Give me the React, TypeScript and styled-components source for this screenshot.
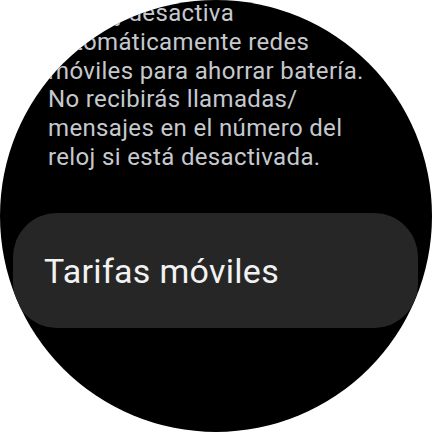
import styled, { createGlobalStyle } from "styled-components";

const GlobalStyle = createGlobalStyle`
  html, body {
    margin: 0;
    padding: 0;
    background: #ffffff;
  }
  * { box-sizing: border-box; }
`;

const Screen = styled.div`
  width: 432px;
  height: 432px;
  border-radius: 50%;
  background: #000000;
  overflow: hidden;
  display: flex;
  flex-direction: column;
  font-family: Roboto, "Noto Sans", sans-serif;
`;

const Description = styled.p`
  margin: -1px 0 0 0;
  padding-left: 48px;
  font-size: 24px;
  line-height: 28.8px;
  letter-spacing: 0.35px;
  color: #c5c9ce;
  white-space: nowrap;
`;

const ListButton = styled.button`
  margin: 41px 0 0 13px;
  width: 405px;
  height: 115px;
  border: none;
  border-radius: 44px;
  background: #262626;
  color: #f2f2f2;
  font-family: inherit;
  font-size: 34px;
  letter-spacing: 0.3px;
  text-align: left;
  padding: 2px 0 0 31px;
  display: flex;
  align-items: center;
`;

export default function App() {
  return (
    <>
      <GlobalStyle />
      <Screen>
        <Description>
          El reloj desactiva
          <br />
          automáticamente redes
          <br />
          móviles para ahorrar batería.
          <br />
          No recibirás llamadas/
          <br />
          mensajes en el número del
          <br />
          reloj si está desactivada.
        </Description>
        <ListButton>Tarifas móviles</ListButton>
      </Screen>
    </>
  );
}
